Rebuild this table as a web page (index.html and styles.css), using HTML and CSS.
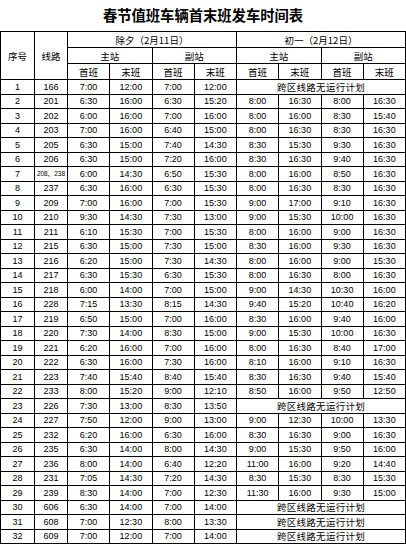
FILE: index.html
```html
<!DOCTYPE html>
<html lang="zh-CN">
<head>
<meta charset="utf-8">
<title>春节值班车辆首末班发车时间表</title>
<link rel="stylesheet" href="styles.css">
</head>
<body>
<h1 class="title">春节值班车辆首末班发车时间表</h1>
<table class="sched">
<colgroup>
<col class="c-seq"><col class="c-line">
<col><col><col><col><col><col><col><col>
</colgroup>
<thead>
<tr class="hr">
<th rowspan="3" class="zh">序号</th>
<th rowspan="3" class="zh">线路</th>
<th colspan="4" class="zh">除夕（2月11日）</th>
<th colspan="4" class="zh">初一（2月12日）</th>
</tr>
<tr class="hr">
<th colspan="2" class="zh">主站</th>
<th colspan="2" class="zh">副站</th>
<th colspan="2" class="zh">主站</th>
<th colspan="2" class="zh">副站</th>
</tr>
<tr class="hr">
<th class="zh">首班</th><th class="zh">末班</th>
<th class="zh">首班</th><th class="zh">末班</th>
<th class="zh">首班</th><th class="zh">末班</th>
<th class="zh">首班</th><th class="zh">末班</th>
</tr>
</thead>
<tbody>
<tr><td>1</td><td>166</td><td>7:00</td><td>12:00</td><td>7:00</td><td>12:00</td><td colspan="4" class="zh none">跨区线路无运行计划</td></tr>
<tr><td>2</td><td>201</td><td>6:30</td><td>16:00</td><td>6:30</td><td>15:20</td><td>8:00</td><td>16:30</td><td>8:00</td><td>16:30</td></tr>
<tr><td>3</td><td>202</td><td>6:00</td><td>16:00</td><td>7:00</td><td>16:00</td><td>8:00</td><td>16:00</td><td>8:30</td><td>15:40</td></tr>
<tr><td>4</td><td>203</td><td>7:00</td><td>16:00</td><td>6:40</td><td>15:00</td><td>8:00</td><td>16:30</td><td>8:30</td><td>16:30</td></tr>
<tr><td>5</td><td>205</td><td>6:30</td><td>15:00</td><td>7:40</td><td>14:30</td><td>8:30</td><td>15:30</td><td>9:30</td><td>16:30</td></tr>
<tr><td>6</td><td>206</td><td>6:30</td><td>15:00</td><td>7:20</td><td>16:00</td><td>8:30</td><td>16:30</td><td>9:40</td><td>16:30</td></tr>
<tr><td>7</td><td class="small">208、238</td><td>6:00</td><td>14:30</td><td>6:50</td><td>15:30</td><td>8:00</td><td>16:00</td><td>8:50</td><td>16:30</td></tr>
<tr><td>8</td><td>237</td><td>6:30</td><td>16:00</td><td>6:30</td><td>15:30</td><td>8:00</td><td>16:30</td><td>8:30</td><td>16:30</td></tr>
<tr><td>9</td><td>209</td><td>7:00</td><td>16:00</td><td>7:00</td><td>15:30</td><td>9:00</td><td>17:00</td><td>9:10</td><td>16:30</td></tr>
<tr><td>10</td><td>210</td><td>9:30</td><td>14:30</td><td>7:30</td><td>13:00</td><td>9:00</td><td>15:30</td><td>10:00</td><td>16:30</td></tr>
<tr><td>11</td><td>211</td><td>6:10</td><td>15:30</td><td>7:00</td><td>15:30</td><td>8:00</td><td>16:00</td><td>9:00</td><td>16:30</td></tr>
<tr><td>12</td><td>215</td><td>6:30</td><td>15:00</td><td>7:30</td><td>15:00</td><td>8:30</td><td>16:00</td><td>9:30</td><td>16:30</td></tr>
<tr><td>13</td><td>216</td><td>6:20</td><td>15:00</td><td>7:30</td><td>14:30</td><td>8:00</td><td>16:00</td><td>9:00</td><td>15:30</td></tr>
<tr><td>14</td><td>217</td><td>6:30</td><td>15:30</td><td>6:30</td><td>15:30</td><td>8:00</td><td>16:30</td><td>8:00</td><td>16:30</td></tr>
<tr><td>15</td><td>218</td><td>6:00</td><td>14:00</td><td>7:00</td><td>15:00</td><td>9:00</td><td>14:30</td><td>10:30</td><td>16:00</td></tr>
<tr><td>16</td><td>228</td><td>7:15</td><td>13:30</td><td>8:15</td><td>14:30</td><td>9:40</td><td>15:20</td><td>10:40</td><td>16:20</td></tr>
<tr><td>17</td><td>219</td><td>6:50</td><td>15:00</td><td>7:00</td><td>16:00</td><td>8:30</td><td>16:00</td><td>9:40</td><td>16:00</td></tr>
<tr><td>18</td><td>220</td><td>7:30</td><td>14:00</td><td>8:30</td><td>15:00</td><td>9:00</td><td>15:30</td><td>10:00</td><td>16:30</td></tr>
<tr><td>19</td><td>221</td><td>6:20</td><td>16:00</td><td>7:00</td><td>16:00</td><td>8:00</td><td>16:30</td><td>8:40</td><td>17:00</td></tr>
<tr><td>20</td><td>222</td><td>6:30</td><td>16:00</td><td>7:30</td><td>16:00</td><td>8:10</td><td>16:00</td><td>9:10</td><td>16:30</td></tr>
<tr><td>21</td><td>223</td><td>7:40</td><td>15:40</td><td>8:40</td><td>15:40</td><td>8:30</td><td>16:30</td><td>9:40</td><td>15:40</td></tr>
<tr><td>22</td><td>233</td><td>8:00</td><td>15:20</td><td>9:00</td><td>12:10</td><td>8:50</td><td>16:00</td><td>9:50</td><td>12:50</td></tr>
<tr><td>23</td><td>226</td><td>7:30</td><td>13:00</td><td>8:30</td><td>13:50</td><td colspan="4" class="zh none">跨区线路无运行计划</td></tr>
<tr><td>24</td><td>227</td><td>7:50</td><td>12:00</td><td>9:00</td><td>13:00</td><td>9:00</td><td>12:30</td><td>10:00</td><td>13:30</td></tr>
<tr><td>25</td><td>232</td><td>6:20</td><td>16:00</td><td>6:30</td><td>16:00</td><td>8:30</td><td>16:30</td><td>9:00</td><td>16:30</td></tr>
<tr><td>26</td><td>235</td><td>6:30</td><td>14:00</td><td>8:00</td><td>14:30</td><td>9:00</td><td>15:30</td><td>9:50</td><td>16:00</td></tr>
<tr><td>27</td><td>236</td><td>8:00</td><td>14:00</td><td>6:40</td><td>12:20</td><td>11:00</td><td>16:00</td><td>9:20</td><td>14:40</td></tr>
<tr><td>28</td><td>231</td><td>7:05</td><td>14:30</td><td>7:20</td><td>14:30</td><td>8:30</td><td>15:30</td><td>8:30</td><td>15:30</td></tr>
<tr><td>29</td><td>239</td><td>8:30</td><td>14:00</td><td>7:00</td><td>12:30</td><td>11:30</td><td>16:00</td><td>9:30</td><td>15:00</td></tr>
<tr><td>30</td><td>606</td><td>6:30</td><td>14:00</td><td>7:00</td><td>14:00</td><td colspan="4" class="zh none">跨区线路无运行计划</td></tr>
<tr><td>31</td><td>608</td><td>7:00</td><td>12:30</td><td>8:00</td><td>13:30</td><td colspan="4" class="zh none">跨区线路无运行计划</td></tr>
<tr><td>32</td><td>609</td><td>7:00</td><td>12:00</td><td>7:00</td><td>14:00</td><td colspan="4" class="zh none">跨区线路无运行计划</td></tr>
</tbody>
</table>
</body>
</html>
```
FILE: styles.css
```css
html, body {
  margin: 0;
  padding: 0;
  background: #fff;
}
body {
  width: 406px;
  height: 544px;
  overflow: hidden;
  font-family: "Liberation Sans", "Noto Sans CJK SC", sans-serif;
  color: #000;
}
.title {
  margin: 0;
  height: 31px;
  line-height: 29px;
  text-align: center;
  font-family: "Noto Sans CJK SC", sans-serif;
  font-size: 14.3px;
  font-weight: 700;
}
.sched {
  width: 406px;
  border-collapse: collapse;
  table-layout: fixed;
}
.c-seq { width: 34px; }
.c-line { width: 33px; }
.sched th,
.sched td {
  border: 1px solid #000;
  padding: 0;
  text-align: center;
  font-size: 9px;
  font-weight: 400;
  line-height: 10px;
  white-space: nowrap;
  overflow: hidden;
}
.sched tr.hr th { height: 15px; }
.sched tbody td { height: 13.5px; }
.sched .zh {
  font-family: "Noto Sans CJK SC", sans-serif;
  font-size: 9.5px;
}
.sched .none {
  letter-spacing: 0.3px;
}
.sched .small {
  font-size: 6.5px;
}
```
